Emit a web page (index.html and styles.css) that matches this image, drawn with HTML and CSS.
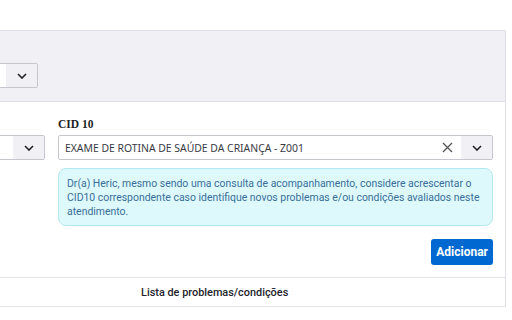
FILE: index.html
```html
<!DOCTYPE html>
<html lang="pt-BR">
<head>
<meta charset="utf-8">
<link rel="stylesheet" href="styles.css">
</head>
<body>
<div class="page">
  <div class="card">
    <div class="panel">
      <div class="panel-field">
        <div class="select">
          <div class="select-value"></div>
          <div class="select-btn">
            <svg width="10" height="6" viewBox="0 0 10 6"><path d="M1 1l4 4 4-4" fill="none" stroke="#222" stroke-width="1.6"/></svg>
          </div>
        </div>
      </div>
    </div>
    <div class="form-row">
      <div class="col-left">
        <div class="label">&nbsp;</div>
        <div class="select">
          <div class="select-value"></div>
          <div class="select-btn">
            <svg width="10" height="6" viewBox="0 0 10 6"><path d="M1 1l4 4 4-4" fill="none" stroke="#222" stroke-width="1.6"/></svg>
          </div>
        </div>
      </div>
      <div class="col-cid">
        <div class="label">CID 10</div>
        <div class="select">
          <div class="select-value">EXAME DE ROTINA DE SAÚDE DA CRIANÇA - Z001</div>
          <div class="select-clear">
            <svg width="11" height="11" viewBox="0 0 11 11"><path d="M1 1l9 9M10 1l-9 9" fill="none" stroke="#555" stroke-width="1.3"/></svg>
          </div>
          <div class="select-btn">
            <svg width="10" height="6" viewBox="0 0 10 6"><path d="M1 1l4 4 4-4" fill="none" stroke="#222" stroke-width="1.6"/></svg>
          </div>
        </div>
        <div class="info">Dr(a) Heric, mesmo sendo uma consulta de acompanhamento, considere acrescentar o CID10 correspondente caso identifique novos problemas e/ou condições avaliados neste atendimento.</div>
        <div class="actions">
          <button class="btn-primary">Adicionar</button>
        </div>
      </div>
    </div>
    <div class="list-header">
      <div class="list-title">Lista de problemas/condições</div>
    </div>
  </div>
</div>
</body>
</html>
```
FILE: styles.css
```css
html, body {
  margin: 0;
  padding: 0;
  background: #fff;
}
body {
  font-family: "Noto Sans", "DejaVu Sans", sans-serif;
  color: #24242c;
  overflow: hidden;
}
.page {
  padding-top: 30px;
  width: 512px;
  height: 290px;
  overflow: hidden;
}
.card {
  margin-left: -300px;
  width: 806px;
  box-sizing: border-box;
  border-right: 1px solid #dfdfe6;
}
.panel {
  height: 72px;
  box-sizing: border-box;
  background: #f0f0f5;
  border-top: 1px solid #dfdfe6;
  border-bottom: 1px solid #dfdfe6;
  padding-top: 32px;
}
.panel-field {
  width: 338px;
}
.select {
  display: flex;
  height: 25px;
  box-sizing: border-box;
  border: 1px solid #c6c6cf;
  border-radius: 2px;
  background: #fff;
  align-items: stretch;
}
.select-value {
  flex: 1;
  display: flex;
  align-items: center;
  padding-left: 6px;
  font-size: 10.4px;
  color: #3a3a44;
  white-space: nowrap;
  overflow: hidden;
}
.select-clear {
  width: 28px;
  display: flex;
  align-items: center;
  justify-content: center;
}
.select-btn {
  width: 31px;
  background: #f0f0f5;
  display: flex;
  align-items: center;
  justify-content: center;
}
.form-row {
  display: flex;
  gap: 13px;
  padding: 15px 12px 0 0;
}
.col-left {
  width: 345px;
  flex: none;
}
.col-cid {
  flex: 1;
}
.label {
  font-family: "Liberation Serif", "DejaVu Serif", serif;
  font-weight: bold;
  font-size: 11.5px;
  height: 18px;
  line-height: 14px;
  color: #1f1f26;
}
.info {
  margin-top: 8px;
  height: 58px;
  box-sizing: border-box;
  background: #ddf9fc;
  border: 1px solid #b3e8f0;
  border-radius: 8px;
  padding: 8px 6px 0 8px;
  font-family: Roboto, "Noto Sans", sans-serif;
  font-size: 10.45px;
  line-height: 14px;
  color: #3a6e98;
}
.actions {
  display: flex;
  justify-content: flex-end;
  margin-top: 13px;
}
.btn-primary {
  height: 26px;
  padding: 0 5px;
  border: none;
  border-radius: 3px;
  background: #0069d1;
  color: #fff;
  font-family: Roboto, "Liberation Sans", sans-serif;
  font-weight: bold;
  font-size: 12px;
}
.list-header {
  margin-top: 12px;
  height: 30px;
  box-sizing: border-box;
  border-top: 1px solid #e4e4ea;
  border-bottom: 1px solid #e4e4ea;
  display: flex;
  align-items: center;
  padding-left: 441px;
}
.list-title {
  font-family: Roboto, "Noto Sans", sans-serif;
  font-weight: 500;
  font-size: 10.9px;
  color: #24242c;
}
```
